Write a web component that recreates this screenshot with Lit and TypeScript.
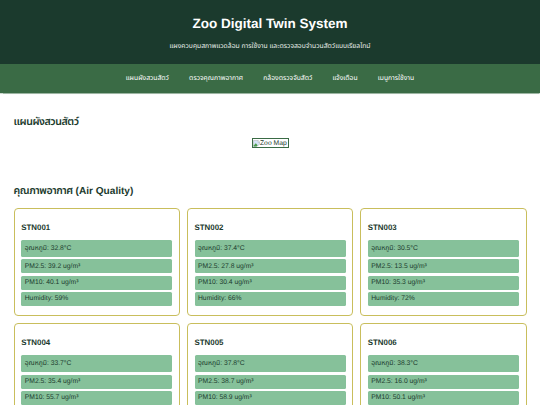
import { LitElement, html, css } from "lit";
import { customElement, property } from "lit/decorators.js";

interface Station {
  id: string;
  temp: string;
  pm25: string;
  pm10: string;
  humidity: number;
}

const STATIONS: Station[] = [
  { id: "STN001", temp: "32.8", pm25: "39.2", pm10: "40.1", humidity: 59 },
  { id: "STN002", temp: "37.4", pm25: "27.8", pm10: "30.4", humidity: 66 },
  { id: "STN003", temp: "30.5", pm25: "13.5", pm10: "35.3", humidity: 72 },
  { id: "STN004", temp: "33.7", pm25: "35.4", pm10: "55.7", humidity: 61 },
  { id: "STN005", temp: "37.8", pm25: "38.7", pm10: "58.9", humidity: 64 },
  { id: "STN006", temp: "38.3", pm25: "16.0", pm10: "50.1", humidity: 70 },
];

const LINKS = ["แผนผังสวนสัตว์", "ตรวจคุณภาพอากาศ", "กล้องตรวจจับสัตว์", "แจ้งเตือน", "เมนูการใช้งาน"];

@customElement("station-card")
export class StationCard extends LitElement {
  @property({ attribute: false }) station!: Station;
  @property({ type: Boolean }) compact = false;

  static styles = css`
    :host {
      display: block;
      box-sizing: border-box;
      height: 108.5px;
      padding: 13.5px 6.75px 0;
      border: 1px solid #c9be5c;
      border-radius: 4px;
      background: #fff;
    }
    .name {
      margin: 0 0 7px;
      font-size: 7.9px;
      line-height: 11px;
      font-weight: 700;
      color: #1b3a2d;
    }
    .rows {
      display: grid;
      grid-template-rows: 17px 14px 14px 14px;
      row-gap: 2.3px;
    }
    .row {
      display: flex;
      align-items: center;
      padding: 0 3.5px;
      border-radius: 1.5px;
      background: #86c19a;
      color: #1b3a2d;
      white-space: pre;
      font-size: 6.75px;
    }
    .temp {
      padding-top: 1px;
    }
  `;

  render() {
    const s = this.station;
    return html`
      <h3 class="name">${s.id}</h3>
      <div class="rows">
        <div class="row temp">อุณหภูมิ: ${s.temp}°C</div>
        <div class="row">PM2.5: ${s.pm25} ug/m³</div>
        <div class="row">PM10: ${s.pm10} ug/m³</div>
        ${this.compact ? "" : html`<div class="row">Humidity: ${s.humidity}%</div>`}
      </div>
    `;
  }
}

@customElement("app-root")
export class AppRoot extends LitElement {
  static styles = css`
    :host {
      display: block;
      height: 405px;
      overflow: hidden;
      background: #fff;
      font-family: "Liberation Sans", Arial, "Noto Sans Thai", "Kanit", sans-serif;
      font-size: 6.75px;
      color: #1b3a2d;
      text-rendering: geometricPrecision;
    }
    header {
      box-sizing: border-box;
      height: 64px;
      padding-top: 15px;
      background: #1b3a2d;
      color: #fff;
      text-align: center;
    }
    h1 {
      margin: 0;
      font-size: 13.5px;
      line-height: 17px;
    }
    .tagline {
      margin: 8.5px 0 0;
      line-height: 11px;
      color: #e9efeb;
    }
    nav {
      display: flex;
      justify-content: center;
      align-items: center;
      gap: 20.2px;
      height: 29px;
      background: #3a6b45;
      box-shadow: 0 0.5px 1px rgba(58, 107, 69, 0.5);
    }
    nav a {
      color: #fff;
      white-space: nowrap;
    }
    main {
      padding: 0 13.5px;
    }
    h2 {
      margin: 0;
      font-size: 10.1px;
      line-height: 16px;
    }
    .thai {
      font-size: 10.6px;
      line-height: 0;
      font-weight: 600;
      letter-spacing: -0.45px;
    }
    .map {
      height: 90px;
      padding-top: 22px;
      box-sizing: border-box;
    }
    .figure {
      display: flex;
      justify-content: center;
      margin-top: 7.25px;
    }
    .frame {
      display: flex;
      align-items: center;
      box-sizing: border-box;
      width: 37px;
      height: 10px;
      border: 1px solid #3a6b45;
      white-space: nowrap;
    }
    .frame svg {
      width: 7.5px;
      height: 7.5px;
      flex: none;
    }
    .air h2 {
      padding-top: 1px;
      margin-bottom: 7.5px;
    }
    .grid {
      display: grid;
      grid-template-columns: repeat(3, 1fr);
      gap: 6.75px;
    }
  `;

  render() {
    return html`
      <header>
        <h1>Zoo Digital Twin System</h1>
        <p class="tagline">แผงควบคุมสภาพแวดล้อม การใช้งาน และตรวจสอบจำนวนสัตว์แบบเรียลไทม์</p>
      </header>
      <nav>${LINKS.map((l) => html`<a>${l}</a>`)}</nav>
      <main>
        <section class="map">
          <h2><span class="thai">แผนผังสวนสัตว์</span></h2>
          <div class="figure">
            <div class="frame">
              <svg viewBox="0 0 16 16">
                <path d="M1 1h10l4 4v3l-4 3-4 4H1z" fill="#d5e3f7" stroke="#a5aaa8" />
                <path d="M2 14v-3l4-4 4 4-3 3z" fill="#4c9c4c" />
                <path d="M11 1v4h4" fill="#fff" stroke="#a5aaa8" />
              </svg>
              <span>Zoo Map</span>
            </div>
          </div>
        </section>
        <section class="air">
          <h2><span class="thai">คุณภาพอากาศ</span> (Air Quality)</h2>
          <div class="grid">
            ${STATIONS.map((s, i) => html`<station-card .station=${s} ?compact=${i > 2}></station-card>`)}
          </div>
        </section>
      </main>
    `;
  }
}
